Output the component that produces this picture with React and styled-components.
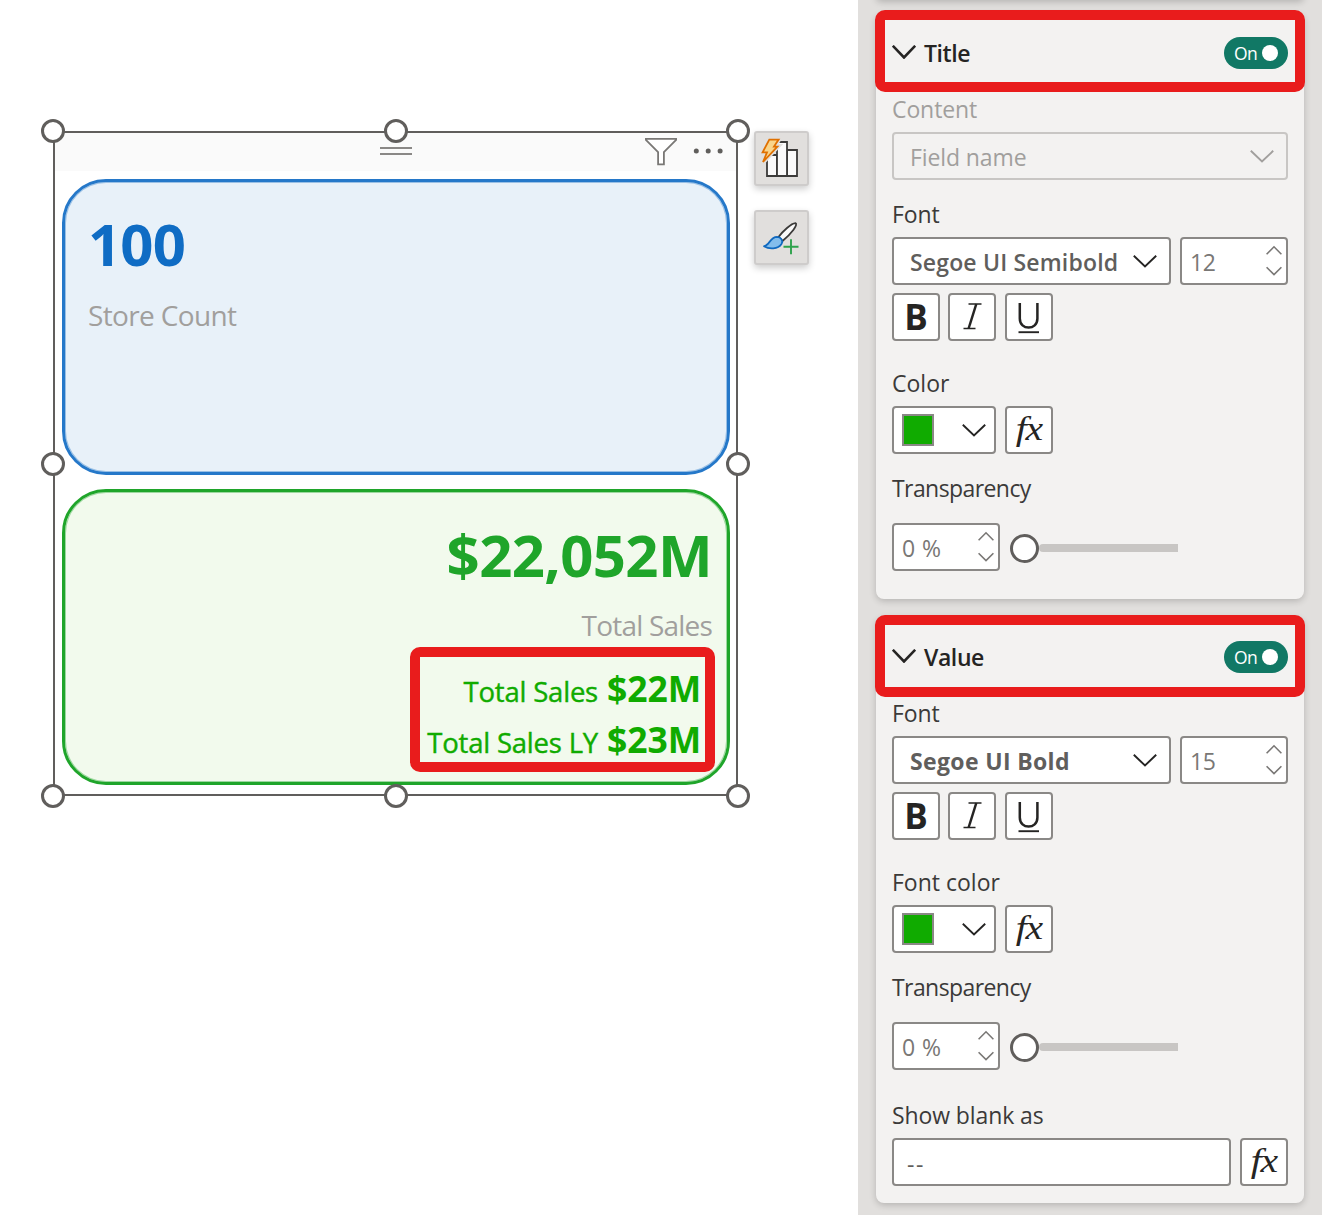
import React from 'react';
import styled, { createGlobalStyle, css } from 'styled-components';

const GlobalStyle = createGlobalStyle`
  * { box-sizing: border-box; }
  body { margin: 0; background: #fff; font-family: 'Open Sans', 'Noto Sans', sans-serif; overflow: hidden; }
  button { font-family: inherit; }
`;

const Page = styled.div`
  display: flex;
  width: 1323px;
  height: 1215px;
  overflow: hidden;
`;

/* ---------- report canvas ---------- */
const Canvas = styled.main`
  flex: 0 0 858px;
  display: flex;
  align-items: flex-start;
  gap: 16px;
  padding: 131px 0 0 53px;
`;

const Visual = styled.section`
  position: relative;
  flex: 0 0 685px;
  height: 665px;
  border: 2px solid #605e5c;
`;

const VisualHeader = styled.header`
  display: grid;
  grid-template-columns: 1fr 32px 1fr;
  height: 38px;
  background: #fafafa;
`;

const Grip = styled.div`
  grid-column: 2;
  height: 8px;
  margin-top: 14px;
  border: solid #8a8886;
  border-width: 2px 0;
`;

const HeaderTools = styled.div`
  display: flex;
  justify-content: flex-end;
  align-items: flex-start;
  gap: 16px;
  padding: 4px 13px 0 0;
`;

const Card = styled.article`
  display: flex;
  flex-direction: column;
  height: 296px;
  margin: ${p => p.$top}px 6px 0 7px;
  padding: ${p => p.$pad};
  align-items: ${p => p.$align};
  border: 3px solid ${p => p.$line};
  border-radius: 44px;
  background: ${p => p.$fill};
  box-shadow: inset 0 0 0 1px ${p => p.$line}66;
`;

const Text = styled.span`
  display: block;
  white-space: pre;
  font-size: ${p => p.$size}px;
  line-height: ${p => p.$line || 32}px;
  font-weight: ${p => p.$weight || 400};
  letter-spacing: ${p => p.$track || 0}px;
  color: ${p => p.$color || '#3b3a39'};
`;

const ReferenceName = styled(Text)`
  -webkit-text-stroke: 0.4px currentColor;
`;

const Reference = styled.div`
  display: flex;
  justify-content: flex-end;
  align-items: baseline;
  gap: 9px;
  height: 51px;
`;

const References = styled.div`
  position: relative;
  width: 305px;
  height: 125px;
  margin: -10px -3px 0 0;
  padding: 16px 14px 0 0;
`;

const Highlight = styled.div`
  position: absolute;
  inset: ${p => p.$inset || '0'};
  border: 10px solid #e91c1c;
  border-radius: 10px;
  pointer-events: none;
`;

const Handle = styled.i`
  position: absolute;
  left: ${p => p.$x};
  top: ${p => p.$y};
  width: 24px;
  height: 24px;
  margin: -12px 0 0 -12px;
  border: 3px solid #605e5c;
  border-radius: 50%;
  background: #fff;
`;

const SideTools = styled.div`
  display: flex;
  flex-direction: column;
  gap: 24px;
`;

const SideButton = styled.button`
  display: flex;
  width: 55px;
  height: 55px;
  padding: 0;
  border: 2px solid #cecccb;
  border-radius: 3px;
  background: #e1dfdd;
  box-shadow: 0 3px 7px rgba(0, 0, 0, 0.2);
`;

/* ---------- format pane ---------- */
const Pane = styled.aside`
  flex: 0 0 464px;
  display: flex;
  flex-direction: column;
  padding: 0 17px;
  background: #e1dfdd;
`;

const shadow = css`
  box-shadow: 0 2px 7px rgba(0, 0, 0, 0.2);
`;

const ClippedGroup = styled.div`
  height: 10px;
  margin: -10px 1px 0;
  border-radius: 8px;
  background: #f3f2f1;
  ${shadow}
`;

const Group = styled.section`
  margin: ${p => p.$top}px 1px 0 1px;
  padding-bottom: ${p => p.$bottom}px;
  border-radius: 8px;
  background: #f3f2f1;
  ${shadow}
`;

const GroupHeader = styled.header`
  position: relative;
  display: flex;
  align-items: center;
  gap: 8px;
  height: 80px;
  padding: 0 16px;

  > svg { margin-bottom: 2px; }
`;

const Toggle = styled.button`
  display: flex;
  align-items: center;
  gap: 5px;
  width: 64px;
  height: 32px;
  margin-left: auto;
  padding: 0 9px 0 10px;
  border: 0;
  border-radius: 16px;
  background: #117865;
`;

const Knob = styled.i`
  width: 16px;
  height: 16px;
  border-radius: 50%;
  background: #fff;
`;

const Field = styled.div`
  padding: 0 16px;
  margin-top: ${p => p.$top || 0}px;
`;

const Label = styled.label`
  display: block;
  height: ${p => p.$height || 39}px;
`;

const Row = styled.div`
  display: flex;
  gap: ${p => p.$gap || 9}px;
  margin-top: ${p => p.$top || 0}px;
`;

const Box = styled.div`
  display: flex;
  align-items: center;
  justify-content: ${p => (p.$center ? 'center' : 'space-between')};
  width: ${p => p.$width}px;
  height: 48px;
  padding: ${p => p.$pad || '0'};
  border: 2px solid ${p => (p.$disabled ? '#c8c6c4' : '#8a8886')};
  border-radius: 4px;
  background: ${p => (p.$disabled ? 'transparent' : '#fff')};

  > ${Text} { padding-top: ${p => (p.$center ? 0 : 2)}px; }
`;

const Swatch = styled.i`
  width: 32px;
  height: 32px;
  border: 2px solid #8a8886;
  background: #10ab00;
`;

const FxText = styled.span`
  font: italic 33px/40px 'Liberation Serif', serif;
  letter-spacing: -1px;
  color: #252423;
  transform: scaleX(1.2);
  padding: 0 1px 3px 0;
`;

const Slider = styled.div`
  display: flex;
  align-items: center;
  padding: 2px 0 0 1px;
`;

const Thumb = styled.i`
  width: 29px;
  height: 29px;
  border: 3px solid #605e5c;
  border-radius: 50%;
  background: #fff;
`;

const Track = styled.i`
  width: 139px;
  height: 8px;
  border-radius: 4px 0 0 4px;
  background: #c8c6c4;
`;

const Chevron = ({ color = '#252423', w = 24, h = 13, stroke = 1.9 }) => (
  <svg width={w} height={h} viewBox={`0 0 ${w} ${h}`} fill="none" stroke={color} strokeWidth={stroke}>
    <path d={`M.8 .8 L${w / 2} ${h - 1.5} L${w - 0.8} .8`} />
  </svg>
);

const Spinner = () => (
  <svg width="16" height="32" viewBox="0 0 16 32" fill="none" stroke="#797775" strokeWidth="1.6">
    <path d="M.6 9.2 L8 1.8 L15.4 9.2 M.6 22.2 L8 29.6 L15.4 22.2" />
  </svg>
);

const FilterIcon = () => (
  <svg width="32" height="29" viewBox="0 0 32 29" fill="#fff" stroke="#797775" strokeWidth="1.8">
    <path d="M.9 1.9 H31.1 V2.8 L18.9 15 V27.4 H13.1 V15 L.9 2.8 Z" />
  </svg>
);

const MoreIcon = () => (
  <svg width="30" height="28" viewBox="0 0 30 28" fill="#605e5c">
    <circle cx="3.3" cy="14" r="2.5" /><circle cx="15.2" cy="14" r="2.5" /><circle cx="27.1" cy="14" r="2.5" />
  </svg>
);

const BOLT = 'M13.3 6.6 H22.6 L18 13.6 H21.4 L7 29 L11 19.3 H6.6 Z';

const ChartIcon = () => (
  <svg width="51" height="51" viewBox="0 0 51 51" fill="#fafafa" stroke="#3b3a39" strokeWidth="1.8">
    <path d="M11 22 H21 V43 H11 Z M31 17 H41 V43 H31 Z" />
    <path d="M21 9 H31 V43 H21 Z" />
    <path d={BOLT} fill="#e1dfdd" stroke="#e1dfdd" strokeWidth="5" />
    <path d={BOLT} fill="#f9d58b" stroke="#e07000" strokeWidth="1.8" />
  </svg>
);

const BrushIcon = () => (
  <svg width="51" height="51" viewBox="0 0 51 51" fill="none" strokeLinejoin="round">
    <path d="M22.5 25 C27 19 35 11.5 39.5 11.2 C42.5 12.5 35 22 26.5 29 Z" fill="#fafafa" stroke="#3b3a39" strokeWidth="1.8" />
    <path d="M8 34.2 C13.5 33.5 14 25 21 24.9 C25 25 27.5 28.5 25.5 32 C22 37.5 13 37.5 8 34.2 Z" fill="#83bdec" stroke="#1069bf" strokeWidth="1.7" />
    <path d="M35 27.3 V42.3 M27.5 34.8 H42.5" stroke="#2ea24c" strokeWidth="1.9" />
  </svg>
);

const ItalicIcon = () => (
  <svg width="44" height="44" viewBox="0 0 44 44" fill="none" stroke="#252423">
    <path d="M18.5 9 H31.5 M13.5 33.5 H25.5" strokeWidth="1.7" />
    <path d="M26.3 9 L18.6 33.5" strokeWidth="2.5" />
  </svg>
);

const UnderlineIcon = () => (
  <svg width="44" height="44" viewBox="0 0 44 44" fill="none" stroke="#252423" strokeWidth="2.5">
    <path d="M12.8 8 V23.5 C12.8 35.6 30.4 35.6 30.4 23.5 V8" />
    <path d="M11.5 37.2 H32" strokeWidth="1.9" />
  </svg>
);

const Fx = () => <Box as="button" $width={48} $center><FxText>fx</FxText></Box>;

const LabelText = ({ children, color, track = -0.1 }) => (
  <Text $size={23} $track={track} $color={color}>{children}</Text>
);

const Header = ({ title, inset }) => (
  <GroupHeader>
    <Chevron h={14} stroke={2.6} />
    <Text $size={23} $weight={600} $track={-0.4} $color="#252423">{title}</Text>
    <Toggle>
      <Text $size={17.5} $color="#fff" $track={-0.5}>On</Text>
      <Knob />
    </Toggle>
    <Highlight $inset={inset} />
  </GroupHeader>
);

const FontField = ({ top, name, weight, track, size }) => (
  <Field $top={top}>
    <Label><LabelText>Font</LabelText></Label>
    <Row>
      <Box $width={279} $pad="0 12px 0 16px">
        <Text $size={23} $weight={weight} $track={track} $color="#605e5c">{name}</Text>
        <Chevron />
      </Box>
      <Box $width={108} $pad="0 4px 0 8px">
        <Text $size={23} $track={-0.4} $color="#797775">{size}</Text>
        <Spinner />
      </Box>
    </Row>
    <Row $top={8} $gap={8.4}>
      <Box as="button" $width={48} $center><Text $size={35} $weight={700} $color="#252423">B</Text></Box>
      <Box as="button" $width={48} $center><ItalicIcon /></Box>
      <Box as="button" $width={48} $center><UnderlineIcon /></Box>
    </Row>
  </Field>
);

const ColorField = ({ label }) => (
  <Field $top={26}>
    <Label><LabelText track={0}>{label}</LabelText></Label>
    <Row>
      <Box $width={104} $pad="0 8px"><Swatch /><Chevron /></Box>
      <Fx />
    </Row>
  </Field>
);

const TransparencyField = () => (
  <Field $top={18}>
    <Label $height={51}><LabelText track={-0.58}>Transparency</LabelText></Label>
    <Row>
      <Box $width={108} $pad="0 4px 0 8px">
        <Text $size={23} $track={0.4} $color="#797775">0 %</Text>
        <Spinner />
      </Box>
      <Slider><Thumb /><Track /></Slider>
    </Row>
  </Field>
);

const handles = [
  ['-2px', '-2px'], ['340.5px', '-2px'], ['683px', '-2px'],
  ['-2px', '330.5px'], ['683px', '330.5px'],
  ['-2px', '663px'], ['340.5px', '663px'], ['683px', '663px'],
];

export default function App() {
  return (
    <>
      <GlobalStyle />
      <Page>
        <Canvas>
          <Visual>
            <VisualHeader>
              <Grip />
              <HeaderTools><FilterIcon /><MoreIcon /></HeaderTools>
            </VisualHeader>
            <Card $top={8} $line="#2578c9" $fill="#e8f1f9" $align="flex-start" $pad="24px 0 0 23px">
              <Text $size={58} $line={76} $weight={700} $track={-0.8} $color="#0f6cc4">100</Text>
              <Text $size={28} $line={66} $track={-0.65} $color="#a19f9d">Store Count</Text>
            </Card>
            <Card $top={14} $line="#1fa52a" $fill="#f2faed" $align="flex-end" $pad="25px 15px 0 0">
              <Text $size={58} $line={76} $weight={700} $track={-0.6} $color="#1fa52a">$22,052M</Text>
              <Text $size={28} $line={64} $track={-0.8} $color="#a19f9d">Total Sales</Text>
              <References>
                {[['Total Sales', '$22M'], ['Total Sales LY', '$23M']].map(([name, value]) => (
                  <Reference key={name}>
                    <ReferenceName $size={27.5} $line={51} $track={-0.2} $color="#10ab00">{name}</ReferenceName>
                    <Text $size={35.5} $line={51} $weight={700} $track={-0.1} $color="#10ab00">{value}</Text>
                  </Reference>
                ))}
                <Highlight />
              </References>
            </Card>
            {handles.map(([x, y]) => <Handle key={x + y} $x={x} $y={y} />)}
          </Visual>
          <SideTools>
            <SideButton><ChartIcon /></SideButton>
            <SideButton><BrushIcon /></SideButton>
          </SideTools>
        </Canvas>
        <Pane>
          <ClippedGroup />
          <Group $top={13} $bottom={28}>
            <Header title="Title" inset="-3px -1px 1px -1px" />
            <Field>
              <Label><LabelText color="#a19f9d">Content</LabelText></Label>
              <Box $width={396} $pad="0 12px 0 16px" $disabled>
                <LabelText color="#a19f9d">Field name</LabelText>
                <Chevron color="#a19f9d" />
              </Box>
            </Field>
            <FontField top={18} name="Segoe UI Semibold" weight={600} track={0.17} size="12" />
            <ColorField label="Color" />
            <TransparencyField />
          </Group>
          <Group $top={18} $bottom={17}>
            <Header title="Value" inset="-2px -1px 0 -1px" />
            <FontField name="Segoe UI Bold" weight={700} track={0.35} size="15" />
            <ColorField label="Font color" />
            <TransparencyField />
            <Field $top={29}>
              <Label><LabelText>Show blank as</LabelText></Label>
              <Row>
                <Box $width={339} $pad="2px 13px 0"><Text $size={23} $track={1.5} $color="#605e5c">--</Text></Box>
                <Fx />
              </Row>
            </Field>
          </Group>
        </Pane>
      </Page>
    </>
  );
}
